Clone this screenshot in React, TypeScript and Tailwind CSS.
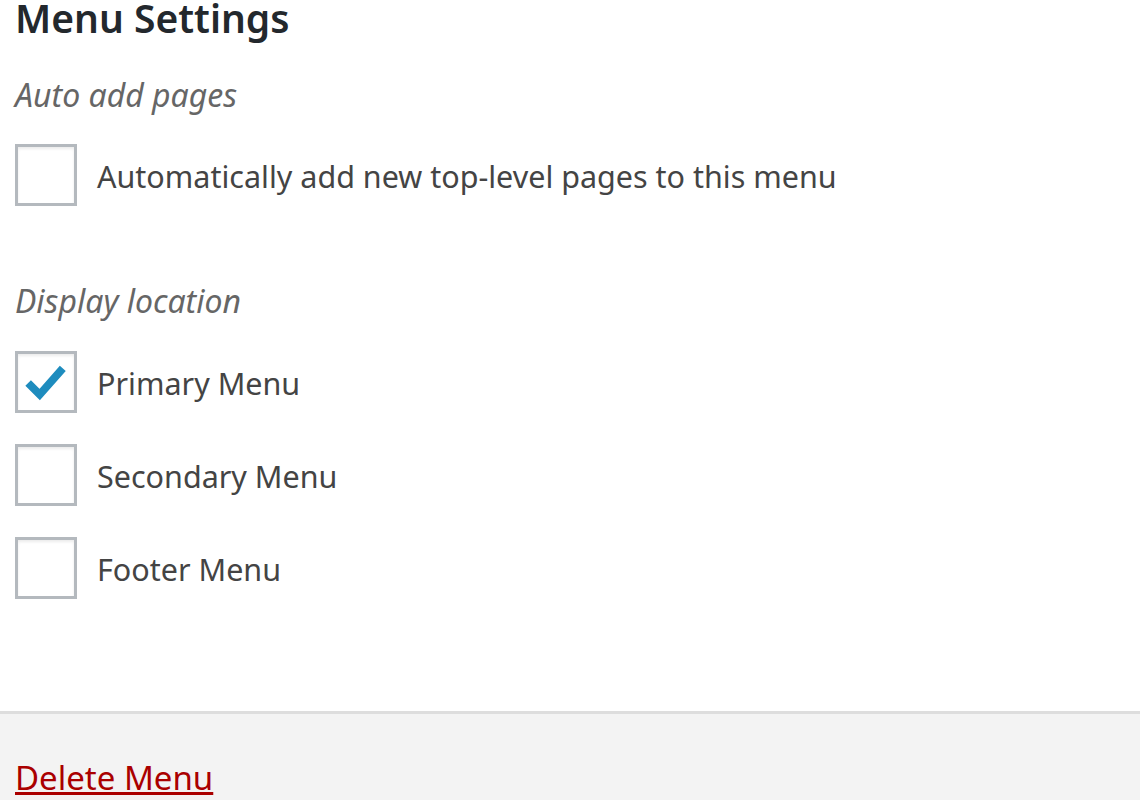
import React, { useState } from 'react';

const FONT = { fontFamily: '"Noto Sans", "Open Sans", sans-serif' };

function Checkbox({ checked, onChange }: { checked: boolean; onChange: () => void }) {
  return (
    <button
      type="button"
      onClick={onChange}
      className="relative flex h-[62px] w-[62px] shrink-0 items-center justify-center border-[3px] border-[#b4b9be] bg-white shadow-[inset_0_2px_3px_rgba(0,0,0,0.08)]"
    >
      {checked && (
        <svg viewBox="0 0 40 40" className="h-[42px] w-[42px]">
          <path d="M3 21 L14 32 L36 7" fill="none" stroke="#1e8cbe" strokeWidth="7.5" strokeLinejoin="miter" />
        </svg>
      )}
    </button>
  );
}

function Option({ label, checked, onChange }: { label: string; checked: boolean; onChange: () => void }) {
  return (
    <label className="flex items-center gap-[20px] text-[30.5px] text-[#444]">
      <Checkbox checked={checked} onChange={onChange} />
      <span className="mt-[3px]">{label}</span>
    </label>
  );
}

export default function App() {
  const [autoAdd, setAutoAdd] = useState(false);
  const [locations, setLocations] = useState({ primary: true, secondary: false, footer: false });

  const toggle = (key: keyof typeof locations) =>
    setLocations(prev => ({ ...prev, [key]: !prev[key] }));

  return (
    <div className="min-h-[800px] bg-white" style={FONT}>
      <div className="px-[15px] pb-[112px]">
        <h3 className="text-[39px] leading-[36px] font-semibold text-[#23282d]">Menu Settings</h3>

        <fieldset className="mt-[39px]">
          <legend className="text-[32px] italic leading-[40px] text-[#666]">Auto add pages</legend>
          <div className="mt-[29px]">
            <Option
              label="Automatically add new top-level pages to this menu"
              checked={autoAdd}
              onChange={() => setAutoAdd(!autoAdd)}
            />
          </div>
        </fieldset>

        <fieldset className="mt-[75px]">
          <legend className="text-[32px] italic leading-[40px] text-[#666]">Display location</legend>
          <div className="mt-[30px] flex flex-col gap-[31px]">
            <Option label="Primary Menu" checked={locations.primary} onChange={() => toggle('primary')} />
            <Option label="Secondary Menu" checked={locations.secondary} onChange={() => toggle('secondary')} />
            <Option label="Footer Menu" checked={locations.footer} onChange={() => toggle('footer')} />
          </div>
        </fieldset>
      </div>

      <div className="border-t-[3px] border-[#dddddd] bg-[#f3f3f3] px-[15px] pt-[44px] pb-[20px]">
        <a href="#" className="text-[33px] leading-[40px] text-[#a00] underline">
          Delete Menu
        </a>
      </div>
    </div>
  );
}
